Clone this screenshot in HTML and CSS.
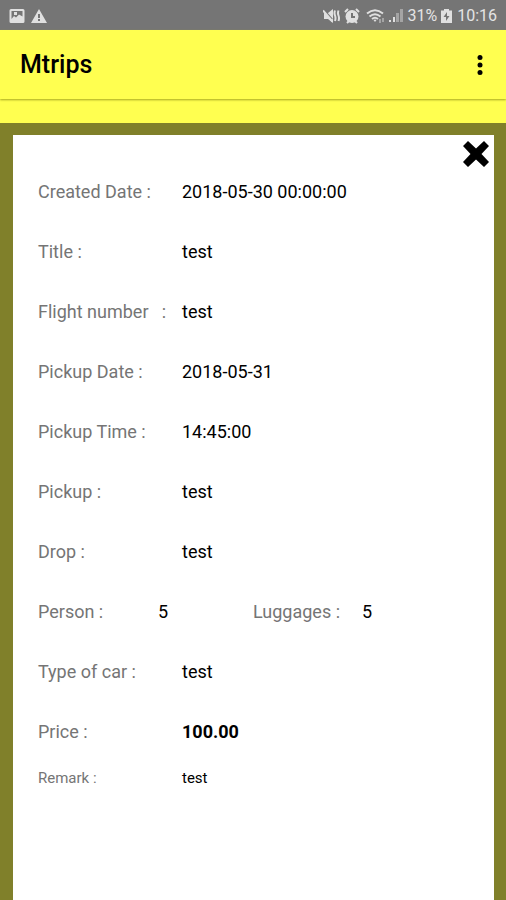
FILE: index.html
```html
<!DOCTYPE html>
<html lang="en">
<head>
<meta charset="utf-8">
<meta name="viewport" content="width=device-width, initial-scale=1">
<title>Mtrips</title>
<link rel="stylesheet" href="styles.css">
</head>
<body>
<div class="status-bar">
  <svg class="icon" width="16" height="16" viewBox="0 0 16 16" aria-hidden="true"><path fill-rule="evenodd" d="M2 1h12q1.500 0 1.500 1.500v11q0 1.500-1.500 1.500H2Q.5 15 .5 13.500v-11Q.5 1 2 1zM2.500 3v8l2.500-3 2 1.500 3-3 3.500 2V3z"/><path d="M5 4h3v3H5z"/></svg>
  <svg class="icon" width="16" height="16" viewBox="0 0 16 16" aria-hidden="true"><path fill-rule="evenodd" d="M8 1l8 14H0zM7 6v4h2V6zM7 11v2h2v-2z"/></svg>
  <span class="status-space"></span>
  <svg class="icon" width="17" height="16" viewBox="0 0 17 16" aria-hidden="true"><path d="M1 5h4l5-4v14l-5-4H1z"/><path class="line" d="M12 2.500q-1 2.500 0 5t0 5.500M15.500 2.500q-1 2.500 0 5t0 5.500"/><path class="slash" d="M2 3.500l7 8"/><path class="line" d="M0 2.500l9.500 11"/></svg>
  <svg class="icon" width="16" height="16" viewBox="0 0 16 16" aria-hidden="true"><circle cx="8" cy="8.500" r="6.500"/><path class="line" d="M1 4l3-3M15 4l-3-3M3 15l2-2M13 15l-2-2"/><path class="hands" d="M8 5v4h3"/></svg>
  <svg class="icon icon-wifi" width="19" height="16" viewBox="0 0 19 16" aria-hidden="true"><path class="line" d="M1 5.500q8-6.500 16 0M3.500 8.500q5.500-4.500 11 0M6 11q3-2.500 6 0"/><path d="M7.500 12q1.500-1 3 0L9 14z"/><path class="faint" d="M13 11h2v4h-2zM16 10h2v4h-2z"/></svg>
  <svg class="icon" width="14" height="16" viewBox="0 0 14 16" aria-hidden="true"><path d="M0 12h2v2H0zM4 9h2v5H4z"/><path class="faint" d="M7 5h3v9H7zM11 1h3v13h-3z"/></svg>
  <span class="battery">31%</span>
  <svg class="icon" width="11" height="16" viewBox="0 0 11 16" aria-hidden="true"><path fill-rule="evenodd" d="M3 1h5v1.500h3V15H0V2.500h3zM6 4L2.500 9H5v4l3.500-5H6z"/></svg>
  <span class="clock">10:16</span>
</div>
<header class="app-bar">
  <h1>Mtrips</h1>
  <button class="menu" type="button" aria-label="More options"><svg width="8" height="22" viewBox="0 0 8 22"><circle cx="4" cy="3.500" r="2.500"/><circle cx="4" cy="11" r="2.500"/><circle cx="4" cy="18.500" r="2.500"/></svg></button>
</header>
<main class="backdrop">
  <section class="card">
    <button class="close" type="button" aria-label="Close"><svg width="26" height="26" viewBox="0 0 26 26"><path d="M5 0l8 7.500L21 0l5 5-7.500 8L26 21l-5 5-8-7.500L5 26l-5-5 7.500-8L0 5z"/></svg></button>
    <dl>
      <div class="row"><dt>Created Date :</dt><dd>2018-05-30 00:00:00</dd></div>
      <div class="row"><dt>Title :</dt><dd>test</dd></div>
      <div class="row"><dt>Flight number   :</dt><dd>test</dd></div>
      <div class="row"><dt>Pickup Date :</dt><dd>2018-05-31</dd></div>
      <div class="row"><dt>Pickup Time :</dt><dd>14:45:00</dd></div>
      <div class="row"><dt>Pickup :</dt><dd>test</dd></div>
      <div class="row"><dt>Drop :</dt><dd>test</dd></div>
      <div class="row row-counts"><dt>Person :</dt><dd>5</dd><dt>Luggages :</dt><dd>5</dd></div>
      <div class="row"><dt>Type of car :</dt><dd>test</dd></div>
      <div class="row row-price"><dt>Price :</dt><dd>100.00</dd></div>
      <div class="row row-remark"><dt>Remark :</dt><dd>test</dd></div>
    </dl>
  </section>
</main>
</body>
</html>
```
FILE: styles.css
```css
* {
  box-sizing: border-box;
}

body {
  margin: 0;
  min-height: 100vh;
  display: flex;
  flex-direction: column;
  background: #ffff50;
  font-family: Roboto, "Liberation Sans", sans-serif;
  color: #000;
}

svg {
  display: block;
}

button {
  padding: 0;
  border: 0;
  background: none;
  cursor: pointer;
}

.status-bar {
  display: flex;
  align-items: center;
  gap: 4px;
  height: 30px;
  padding: 2px 9px 0;
  background: #757575;
  color: #e4e4e4;
  font-size: 16px;
  line-height: 20px;
}

.icon {
  flex: none;
  fill: #e0e0e0;
}

.icon:nth-of-type(2) {
  margin-left: 2px;
}

.status-space {
  flex: 1;
}

.line {
  fill: none;
  stroke: #e0e0e0;
  stroke-width: 2;
}

.slash,
.hands {
  fill: none;
  stroke: #757575;
  stroke-width: 2;
}

.faint {
  fill: #a4a4a4;
}

.icon-wifi {
  margin-left: 2px;
}

.clock {
  margin-left: 1px;
}

.app-bar {
  display: flex;
  align-items: center;
  justify-content: space-between;
  height: 69px;
  padding: 0 22px 0 20px;
  box-shadow: 0 1px 2px #a8a820;
}

.app-bar h1 {
  margin: 0;
  font-size: 25px;
  font-weight: 500;
  line-height: 34px;
}

.backdrop {
  flex: 1;
  display: flex;
  margin-top: 24px;
  padding: 12px 12px 0 13px;
  background: #80802a;
}

.card {
  position: relative;
  flex: 1;
  padding: 27px 25px 0;
  background: #fff;
}

.close {
  position: absolute;
  top: 6px;
  right: 5px;
}

dl,
dd {
  margin: 0;
}

.row {
  display: grid;
  grid-template-columns: 144px 1fr;
  align-items: center;
  height: 60px;
  font-size: 18px;
  line-height: 24px;
}

.row dt {
  color: #757575;
  white-space: pre;
}

.row-counts {
  grid-template-columns: 120px 95px 109px 1fr;
}

.row-price dd {
  font-weight: 700;
}

.row-remark {
  height: 32px;
  font-size: 15px;
}
```
